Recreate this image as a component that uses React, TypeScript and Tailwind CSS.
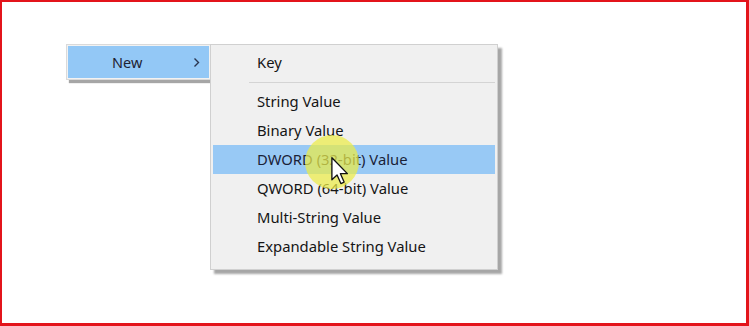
import React from "react";

const items = [
  "String Value",
  "Binary Value",
  "DWORD (32-bit) Value",
  "QWORD (64-bit) Value",
  "Multi-String Value",
  "Expandable String Value",
];

export default function App() {
  return (
    <div
      className="relative w-[749px] h-[326px] bg-white border-t-2 border-l-2 border-r-[3px] border-b-[3px] border-[#e3141b] overflow-hidden"
      style={{ fontFamily: '"Noto Sans", "Open Sans", sans-serif' }}
    >
      <div className="flex items-start pt-[42px] pl-[64px]">
        {/* Parent menu */}
        <div className="w-[145px] h-[36px] bg-[#f2f2f2] border border-[#dadada] p-[1px] shadow-[3px_3px_1px_rgba(0,0,0,0.35)]">
          <div className="h-full bg-[#93c8f6] flex items-center">
            <span className="ml-[44px] text-[14.5px] text-[#1e2233] leading-none">New</span>
            <span className="ml-auto mr-[9px]">
              <svg width="7" height="11" viewBox="0 0 7 11">
                <path d="M1.5 1.5 L5.5 5.5 L1.5 9.5" fill="none" stroke="#2a3550" strokeWidth="1.4" />
              </svg>
            </span>
          </div>
        </div>
        {/* Submenu */}
        <div className="-ml-[1px] w-[288px] bg-[#f0f0f0] border border-[#d0d0d0] pt-[3px] pb-[8px] shadow-[4px_4px_2px_rgba(0,0,0,0.35)]">
          <div className="mx-[2px] h-[29px] flex items-center pl-[44px] text-[14.8px] text-[#151515]">Key</div>
          <div className="h-[10px] pt-[5px]">
            <div className="ml-[38px] mr-[2px] h-px bg-[#d4d4d4]" />
          </div>
          {items.map((t, i) => (
            <div
              key={t}
              className={
                i === 2
                  ? "mx-[2px] h-[29px] flex items-center pl-[44px] text-[14.8px] text-[#1a2238] bg-[#98c9f5]"
                  : "mx-[2px] h-[29px] flex items-center pl-[44px] text-[14.8px] text-[#151515]"
              }
            >
              {t}
            </div>
          ))}
        </div>
      </div>
      {/* Cursor highlight */}
      <div className="absolute left-[303px] top-[133px] w-[54px] h-[54px] rounded-full bg-[rgba(236,236,70,0.72)]" />
      <svg className="absolute left-[329px] top-[155px]" width="18" height="28" viewBox="0 0 12 19">
        <path
          d="M0.5 0.5 L0.5 15.5 L4 12.2 L6.6 18 L8.8 17 L6.3 11.3 L11 11.3 Z"
          fill="#ffffff"
          stroke="#111111"
          strokeWidth="0.9"
          strokeLinejoin="round"
        />
      </svg>
    </div>
  );
}
